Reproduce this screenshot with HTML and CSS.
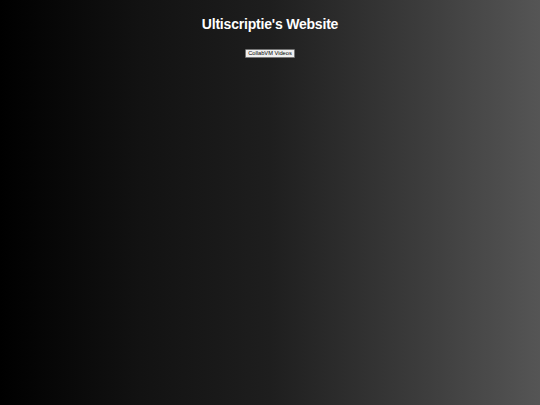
FILE: index.html
```html
<!DOCTYPE html>
<html>
<head>
<meta charset="utf-8">
<link rel="stylesheet" href="styles.css">
</head>
<body>
<div class="page">
  <h1 class="title">Ultiscriptie's Website</h1>
  <button class="btn">CollabVM Videos</button>
</div>
</body>
</html>
```
FILE: styles.css
```css
html, body {
  margin: 0;
  padding: 0;
  height: 100%;
}
body {
  background: linear-gradient(to right, #000 0%, #121212 26%, #1e1e1e 50%, #3a3a3a 76%, #555 100%);
  font-family: "Liberation Sans", Arial, sans-serif;
  color: #fff;
}
.page {
  display: flex;
  flex-direction: column;
  align-items: center;
  padding-top: 15px;
}
.title {
  margin: 0;
  font-size: 14px;
  letter-spacing: -0.2px;
  font-weight: bold;
  line-height: 18px;
}
.btn {
  margin-top: 16px;
  font-family: "Liberation Sans", Arial, sans-serif;
  font-size: 5.7px;
  line-height: 7px;
  padding: 0 2px;
  background: #efefef;
  color: #000;
  border: 1px solid #767676;
  border-radius: 1px;
}
```
